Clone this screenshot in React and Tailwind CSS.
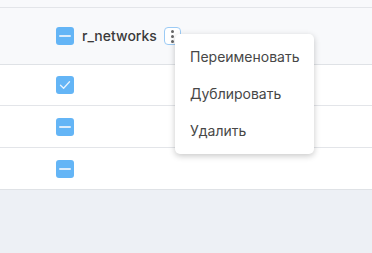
import React from "react";

function Box({ type }) {
  return (
    <div className="w-[18px] h-[18px] rounded-[3px] bg-[#64b5f6] flex items-center justify-center">
      {type === "check" ? (
        <svg width="12" height="10" viewBox="0 0 12 10" fill="none">
          <path d="M1.5 5.2 L4.6 8.2 L10.5 1.8" stroke="#e8f3fd" strokeWidth="1.3" strokeLinecap="round" strokeLinejoin="round" />
        </svg>
      ) : (
        <div className="w-[12px] h-[2px] rounded-full bg-[#dcecfb]" />
      )}
    </div>
  );
}

export default function App() {
  return (
    <div className="relative w-[372px] h-[253px] bg-[#edf0f5] overflow-hidden" style={{ fontFamily: "Inter, 'Noto Sans', sans-serif" }}>
      <div className="h-[8px] bg-[#f8f9fb] border-b border-[#e3e5e9]" />
      <div className="h-[57px] bg-[#f8f9fb] border-b border-[#dfe2e6] flex items-center pl-[56px]">
        <Box type="minus" />
        <span className="ml-[8px] text-[14px] font-medium text-[#3a3a3a] leading-none">r_networks</span>
        <div className="ml-[7px] w-[17px] h-[18px] rounded-[4px] border border-[#9ccbf5] bg-white flex flex-col items-center justify-center gap-[2px]">
          <div className="w-[3px] h-[3px] rounded-full bg-[#666]" />
          <div className="w-[3px] h-[3px] rounded-full bg-[#666]" />
          <div className="w-[3px] h-[3px] rounded-full bg-[#666]" />
        </div>
      </div>
      <div className="h-[41px] bg-white border-b border-[#e3e5e9] flex items-center pl-[56px]">
        <Box type="check" />
      </div>
      <div className="h-[42px] bg-white border-b border-[#e3e5e9] flex items-center pl-[56px]">
        <Box type="minus" />
      </div>
      <div className="h-[42px] bg-white border-b border-[#dfe2e6] flex items-center pl-[56px]">
        <Box type="minus" />
      </div>

      <div className="absolute left-[175px] top-[34px] w-[139px] h-[120px] bg-white rounded-[5px] shadow-[0_2px_6px_rgba(0,0,0,0.22)] pt-[4px]">
        {["Переименовать", "Дублировать", "Удалить"].map((t) => (
          <div key={t} className="h-[37px] flex items-center pl-[15px] text-[14px] text-[#474747]">
            {t}
          </div>
        ))}
      </div>
    </div>
  );
}
